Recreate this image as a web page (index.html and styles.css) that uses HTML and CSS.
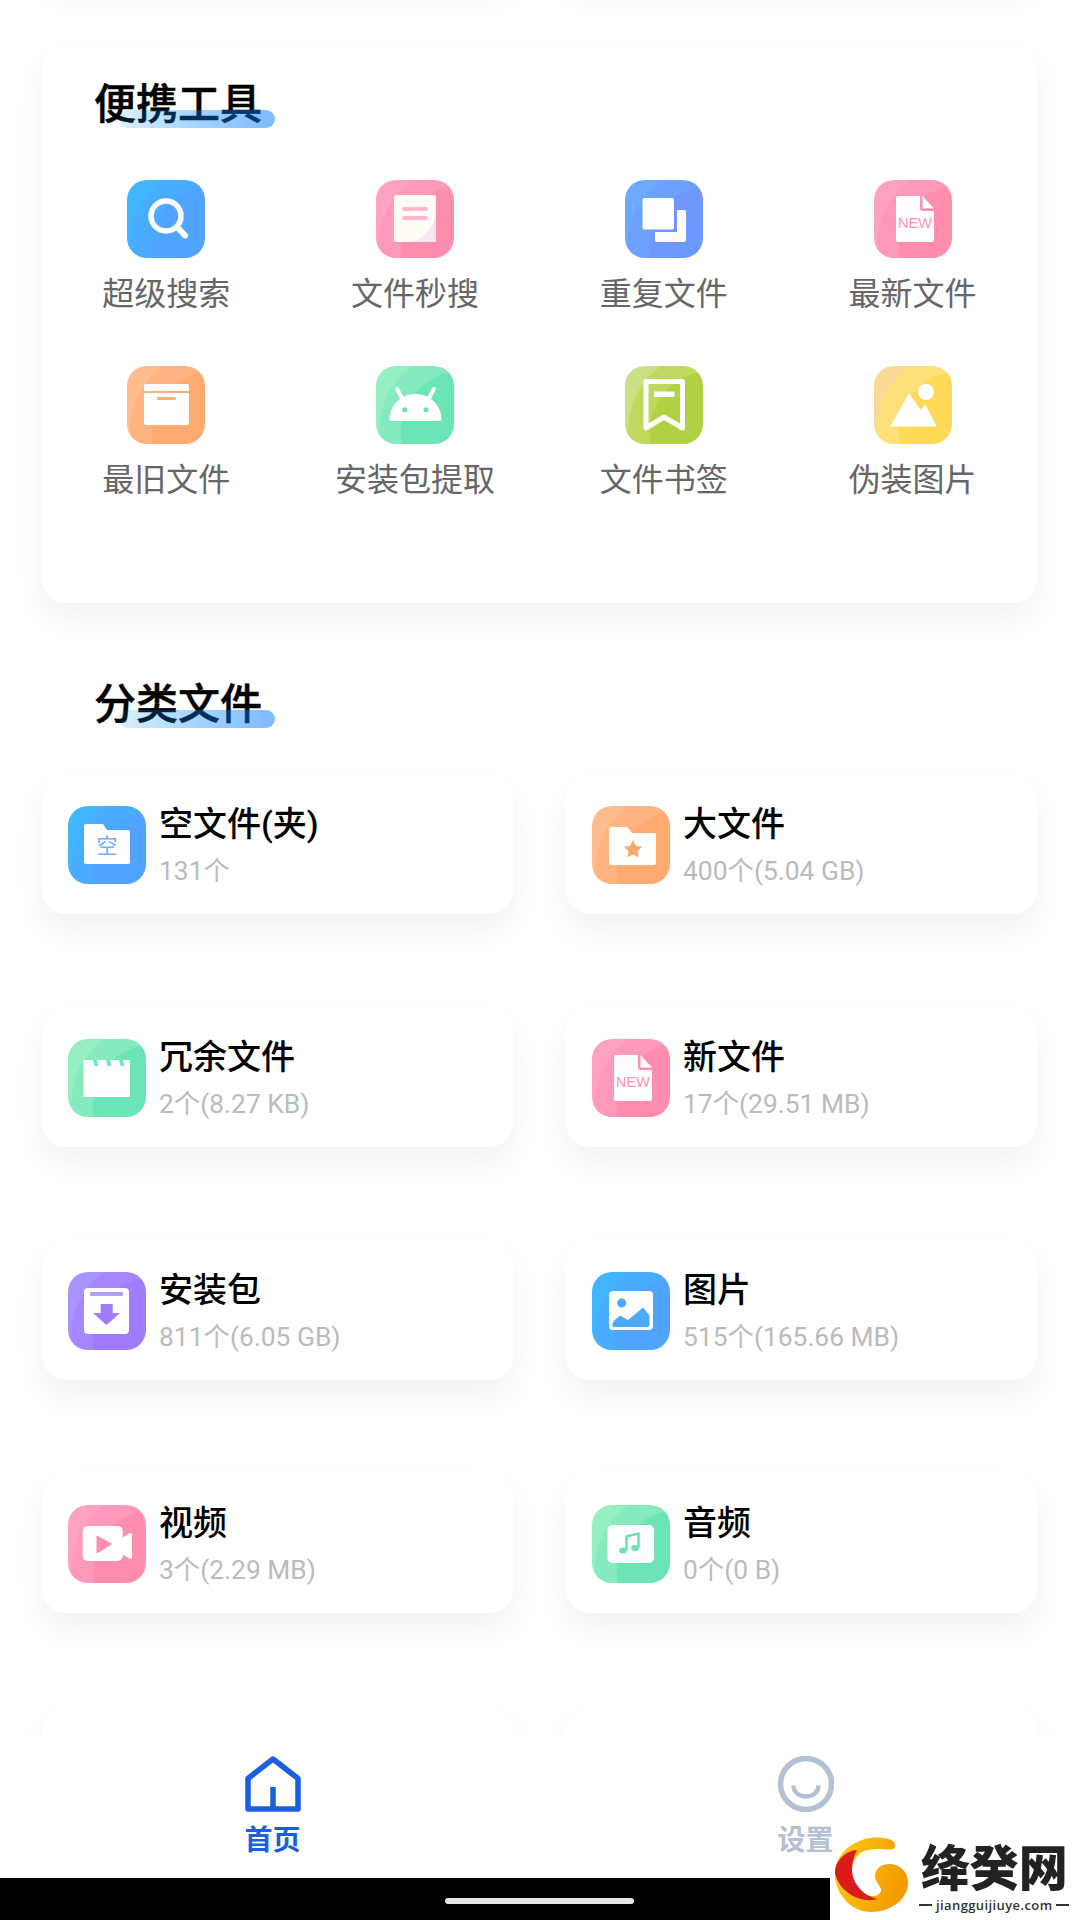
FILE: index.html
```html
<!DOCTYPE html>
<html>
  <head>
    <meta charset="utf-8" />
    <title>文件管理</title>
    <link rel="stylesheet" href="styles.css">
  </head>

  <body>
    <div class="page">
      <div class="card-grid ghost-row">
        <div class="card ghost"></div>
        <div class="card ghost"></div>
      </div>

      <section class="card tools">
        <h2 class="section-title">便携工具<span class="title-bar"></span></h2>
        <div class="tool-grid">
          <div class="tool">
            <div class="tile blue">
              <svg viewBox="0 0 78 78"><circle cx="39" cy="36" r="15" fill="none" stroke="#fff" stroke-width="5.500"/><path d="M50 47l8 8.500" stroke="#fff" stroke-width="6" stroke-linecap="round"/></svg>
            </div>
            <span class="tool-name">超级搜索</span>
          </div>
          <div class="tool">
            <div class="tile pink">
              <svg viewBox="0 0 78 78"><path d="M20 15h38a2 2 0 0 1 2 2v43a2 2 0 0 1-2 2H20a2 2 0 0 1-2-2V17a2 2 0 0 1 2-2z" fill="#fffcf4"/><path d="M60 36v24a2 2 0 0 1-2 2H36c12-4 20-14 24-26z" fill="#fde6f1"/><path d="M28 29h22M28 38h22" stroke="#ffb6d0" stroke-width="4" stroke-linecap="round"/></svg>
            </div>
            <span class="tool-name">文件秒搜</span>
          </div>
          <div class="tool">
            <div class="tile indigo">
              <svg viewBox="0 0 78 78"><rect x="17.500" y="18" width="31.500" height="31.500" rx="2" fill="#fff"/><path d="M52 30h7a2 2 0 0 1 2 2v28a2 2 0 0 1-2 2H32a2 2 0 0 1-2-2v-8h22z" fill="#fff"/></svg>
            </div>
            <span class="tool-name">重复文件</span>
          </div>
          <div class="tool">
            <div class="tile pink">
              <svg viewBox="0 0 78 78"><path d="M24 16h22v12a3 3 0 0 0 3 3h11v29a2 2 0 0 1-2 2H24a2 2 0 0 1-2-2V18a2 2 0 0 1 2-2z" fill="#fff"/><path d="M48.500 16l11.500 12.500H48.500z" fill="#fff"/><text x="41" y="47.500" class="new-mark">NEW</text></svg>
            </div>
            <span class="tool-name">最新文件</span>
          </div>
          <div class="tool">
            <div class="tile orange">
              <svg viewBox="0 0 78 78"><path d="M19 18h41a2 2 0 0 1 2 2v5H17v-5a2 2 0 0 1 2-2z" fill="#fff"/><path d="M17 27h45v30a2 2 0 0 1-2 2H19a2 2 0 0 1-2-2z" fill="#fff"/><rect x="30" y="31" width="19" height="3" rx="1" fill="#ffad72"/></svg>
            </div>
            <span class="tool-name">最旧文件</span>
          </div>
          <div class="tool">
            <div class="tile green">
              <svg viewBox="0 0 78 78"><path d="M13.500 53C14 39 25 28 39.500 28S65 39 65.500 53a2 2 0 0 1-2 2h-48a2 2 0 0 1-2-2z" fill="#fff"/><path d="M21 23l5 9M58 23l-5 9" stroke="#fff" stroke-width="4" stroke-linecap="round"/><circle cx="28.700" cy="43.700" r="2.500" fill="#68e4b4"/><circle cx="50" cy="43.700" r="2.500" fill="#68e4b4"/></svg>
            </div>
            <span class="tool-name">安装包提取</span>
          </div>
          <div class="tool">
            <div class="tile lime">
              <svg viewBox="0 0 78 78"><path d="M21 15.500h36.500V62L39 51 21 62z" fill="none" stroke="#fff" stroke-width="5" stroke-linejoin="round"/><rect x="29" y="25.500" width="20.500" height="5.500" fill="#fff"/></svg>
            </div>
            <span class="tool-name">文件书签</span>
          </div>
          <div class="tool">
            <div class="tile yellow">
              <svg viewBox="0 0 78 78"><circle cx="52" cy="26" r="8" fill="#fff"/><path d="M17 60L35 28l11.500 16.500 4.500-5.500 11 21z" fill="#fff" stroke="#fff" stroke-linejoin="round"/></svg>
            </div>
            <span class="tool-name">伪装图片</span>
          </div>
        </div>
      </section>

      <h2 class="section-title second">分类文件<span class="title-bar"></span></h2>

      <div class="card-grid">
        <div class="card file">
          <div class="tile blue">
            <svg viewBox="0 0 78 78"><path d="M18 18h17l4 6h21a2 2 0 0 1 2 2v30a2 2 0 0 1-2 2H18a2 2 0 0 1-2-2V20a2 2 0 0 1 2-2z" fill="#fff"/><text x="39" y="47" class="kong-mark">空</text></svg>
          </div>
          <div class="file-text">
            <span class="file-name">空文件(夹)</span>
            <span class="file-info">131个</span>
          </div>
        </div>
        <div class="card file">
          <div class="tile orange">
            <svg viewBox="0 0 78 78"><path d="M19 21h16l5 6h22a2 2 0 0 1 2 2v28a2 2 0 0 1-2 2H19a2 2 0 0 1-2-2V23a2 2 0 0 1 2-2z" fill="#fff"/><path d="M41 34l2.800 5.800 6.300.9-4.500 4.400 1 6.300-5.600-3-5.600 3 1-6.300-4.500-4.400 6.300-.9z" fill="#ffa96e"/></svg>
          </div>
          <div class="file-text">
            <span class="file-name">大文件</span>
            <span class="file-info">400个(5.04 GB)</span>
          </div>
        </div>
        <div class="card file">
          <div class="tile green">
            <svg viewBox="0 0 78 78"><rect x="15.500" y="21" width="46.500" height="37" fill="#fff"/><path d="M25 21h4l1.500 6h-4zM38 21h4l1.500 6h-4zM51 21h4l1.500 6h-4z" fill="#78e6bb"/></svg>
          </div>
          <div class="file-text">
            <span class="file-name">冗余文件</span>
            <span class="file-info">2个(8.27 KB)</span>
          </div>
        </div>
        <div class="card file">
          <div class="tile pink">
            <svg viewBox="0 0 78 78"><path d="M24 16h22v12a3 3 0 0 0 3 3h11v29a2 2 0 0 1-2 2H24a2 2 0 0 1-2-2V18a2 2 0 0 1 2-2z" fill="#fff"/><path d="M48.500 16l11.500 12.500H48.500z" fill="#fff"/><text x="41" y="47.500" class="new-mark">NEW</text></svg>
          </div>
          <div class="file-text">
            <span class="file-name">新文件</span>
            <span class="file-info">17个(29.51 MB)</span>
          </div>
        </div>
        <div class="card file">
          <div class="tile purple">
            <svg viewBox="0 0 78 78"><path d="M20 16h37a4 4 0 0 1 4 4v38a4 4 0 0 1-4 4H20a4 4 0 0 1-4-4V20a4 4 0 0 1 4-4z" fill="#fff"/><rect x="22" y="20" width="33" height="4" rx="1" fill="#b79fff"/><path d="M32.700 32h12v9H52L38.500 53 25 41h7.700z" fill="#a07cff"/></svg>
          </div>
          <div class="file-text">
            <span class="file-name">安装包</span>
            <span class="file-info">811个(6.05 GB)</span>
          </div>
        </div>
        <div class="card file">
          <div class="tile blue">
            <svg viewBox="0 0 78 78"><rect x="17" y="19" width="44" height="39" rx="4" fill="#fff"/><circle cx="29.700" cy="31" r="4.500" fill="#4eaaff"/><path d="M20.500 52c0-3 5-6 7.500-8.500l8 4.500 15-12.500 6.500 8V53a2 2 0 0 1-2 2H22a2 2 0 0 1-1.500-3z" fill="#4eaaff"/></svg>
          </div>
          <div class="file-text">
            <span class="file-name">图片</span>
            <span class="file-info">515个(165.66 MB)</span>
          </div>
        </div>
        <div class="card file">
          <div class="tile pink">
            <svg viewBox="0 0 78 78"><rect x="14.700" y="21" width="40" height="35" rx="5" fill="#fff"/><path d="M54 33l8-5a1.500 1.500 0 0 1 2 1.500v23a1.500 1.500 0 0 1-2 1.500l-8-5z" fill="#fff"/><path d="M29 31l14.500 8L29 48z" fill="#ff8fb0" stroke="#ff8fb0" stroke-linejoin="round"/></svg>
          </div>
          <div class="file-text">
            <span class="file-name">视频</span>
            <span class="file-info">3个(2.29 MB)</span>
          </div>
        </div>
        <div class="card file">
          <div class="tile green">
            <svg viewBox="0 0 78 78"><rect x="15.500" y="20" width="46.500" height="38" rx="5" fill="#fff"/><path d="M34.500 45V31.500l12-3V43" fill="none" stroke="#6ae2b4" stroke-width="2.500"/><ellipse cx="31" cy="45.500" rx="3.800" ry="3" fill="#6ae2b4"/><ellipse cx="43" cy="43" rx="3.800" ry="3" fill="#6ae2b4"/></svg>
          </div>
          <div class="file-text">
            <span class="file-name">音频</span>
            <span class="file-info">0个(0 B)</span>
          </div>
        </div>
        <div class="card ghost"></div>
        <div class="card ghost"></div>
      </div>
    </div>

    <div class="bottom">
      <nav class="tabs">
        <div class="tab active">
          <svg viewBox="0 0 56 56" class="tab-icon"><path d="M3 22.500L28 3l25 19.500V53H3zM28 31v22" fill="none" stroke="#1a5fe0" stroke-width="5.500" stroke-linejoin="round"/></svg>
          <span>首页</span>
        </div>
        <div class="tab">
          <svg viewBox="0 0 56 56" class="tab-icon"><circle cx="28" cy="28" r="25.500" fill="none" stroke="#b4c0d4" stroke-width="5.500"/><path d="M15.500 29.500c0 7 6 11 12.500 11s12.500-4 12.500-11" fill="none" stroke="#b4c0d4" stroke-width="4.500"/></svg>
          <span>设置</span>
        </div>
      </nav>
      <div class="system-bar"><div class="home-line"></div></div>
    </div>

    <div class="watermark">
      <svg viewBox="0 0 73 75" class="watermark-logo">
        <defs>
          <linearGradient id="gold" x1="0" y1="0" x2="1" y2="0.300">
            <stop offset="0" stop-color="#fdcb10"/>
            <stop offset="1" stop-color="#f39c00"/>
          </linearGradient>
        </defs>
        <path d="M58 4C50-1 30-2 15 9 3 18-1 30 0 40c2 20 18 35 36 35 20 0 37-13 37-29 0-12-9-19-19-19-8 0-14 5-14 12 0 5 4 8 6 13 1 4-4 8-10 7-11-2-19-13-19-25 0-11 6-19 16-21 12-3 27 3 27-4 0-2 0-4-2-5z" fill="url(#gold)"/>
        <path d="M22 13C10 14 0 24 0 36c2 8 6 14 11 18 9 8 21 11 32 8-13-2-25-14-26-28 0-10 3-17 5-21z" fill="#dc1a1c"/>
      </svg>
      <div class="watermark-text">
        <span class="watermark-name">绛癸网</span>
        <span class="watermark-url"><i></i>jiangguijiuye.com<i></i></span>
      </div>
    </div>
  </body>
</html>
```

FILE: styles.css
```css
* {
  box-sizing: border-box;
}
html,
body {
  margin: 0;
  width: 1080px;
  height: 1920px;
  overflow: hidden;
  background: #fff;
  font-family: Roboto, "Noto Sans CJK SC", sans-serif;
}
.page {
  padding: 0 43px 0 42px;
}

.card {
  background: #fff;
  border-radius: 24px;
  box-shadow: 0 16px 32px rgba(0, 0, 0, 0.055);
}
.card-grid {
  display: grid;
  grid-template-columns: 1fr 1fr;
  column-gap: 53px;
  row-gap: 94px;
}
.ghost {
  height: 139px;
}
.ghost-row {
  margin-top: -160px;
  margin-bottom: 66px;
}

.section-title {
  position: relative;
  display: block;
  width: 168px;
  margin: 0 0 0 52px;
  font-size: 42px;
  line-height: 52px;
  font-weight: 500;
  -webkit-text-stroke: 0.5px #000;
  color: #000;
}
.section-title.second {
  margin-top: 76px;
  margin-bottom: 44px;
}
.title-bar {
  position: absolute;
  left: 25px;
  top: 31px;
  width: 156px;
  height: 18px;
  border-radius: 9px;
  background: linear-gradient(90deg, rgba(0, 150, 255, 0.14), rgba(0, 135, 255, 0.36) 50%, rgba(0, 116, 255, 0.5));
}

.tools {
  height: 558px;
  padding-top: 34px;
}
.tool-grid {
  display: grid;
  grid-template-columns: repeat(4, 1fr);
  row-gap: 55px;
  margin-top: 49px;
}
.tool {
  display: flex;
  flex-direction: column;
  align-items: center;
}
.tool-name {
  margin-top: 19px;
  font-size: 32px;
  line-height: 34px;
  color: #666;
}

.tile {
  flex: none;
  width: 78px;
  height: 78px;
  border-radius: 20px;
  background:
    radial-gradient(circle at 110% 85%, var(--c3) 0 60px, transparent 62px),
    radial-gradient(circle at 110% 85%, var(--c2) 0 82px, transparent 84px),
    var(--c1);
}
.tile svg {
  display: block;
  width: 78px;
  height: 78px;
}
.blue {
  --c1: #42b5ff;
  --c2: #4aacff;
  --c3: #50a3ff;
}
.pink {
  --c1: #ffa2c2;
  --c2: #ff98b9;
  --c3: #ff8dae;
}
.indigo {
  --c1: #6eaaff;
  --c2: #6da1ff;
  --c3: #6e98ff;
}
.orange {
  --c1: #ffbc8e;
  --c2: #ffb380;
  --c3: #ffaa70;
}
.green {
  --c1: #96efc2;
  --c2: #85ebbf;
  --c3: #6be4b6;
}
.lime {
  --c1: #cbdf85;
  --c2: #bed95e;
  --c3: #b0d143;
}
.yellow {
  --c1: #fdd996;
  --c2: #fee07a;
  --c3: #ffda58;
}
.purple {
  --c1: #a893ff;
  --c2: #a586ff;
  --c3: #a07aff;
}
.new-mark {
  font-family: "Liberation Sans", sans-serif;
  font-size: 14.5px;
  fill: #ff92b2;
  text-anchor: middle;
}
.kong-mark {
  font-family: "Noto Sans CJK SC", sans-serif;
  font-size: 21px;
  fill: #6fb0ff;
  text-anchor: middle;
}

.file {
  display: flex;
  gap: 13px;
  height: 139px;
  padding: 31px 26px 30px;
}
.file-text {
  display: flex;
  flex-direction: column;
  justify-content: center;
  gap: 10px;
  padding-top: 2px;
}
.file-name {
  font-size: 34px;
  line-height: 40px;
  font-weight: 500;
  color: #000;
}
.file-info {
  font-size: 26.4px;
  line-height: 34px;
  color: #bbb;
}

.bottom {
  position: absolute;
  left: 0;
  right: 0;
  bottom: 0;
  background: #fff;
}
.tabs {
  display: grid;
  grid-template-columns: 1fr 1fr;
  height: 142px;
  padding: 20px 8px 0 6px;
}
.tab {
  display: flex;
  flex-direction: column;
  align-items: center;
  font-size: 28px;
  line-height: 32px;
  font-weight: 700;
  color: #b4c0d4;
}
.tab.active {
  color: #1a5fe0;
}
.tab-icon {
  display: block;
  width: 56px;
  height: 56px;
  margin-bottom: 13px;
}
.system-bar {
  width: 830px;
  height: 42px;
  padding: 20px 0 0 445px;
  background: #000;
}
.home-line {
  width: 189px;
  height: 6px;
  border-radius: 3px;
  background: #e6e6e6;
}

.watermark {
  position: absolute;
  left: 835px;
  top: 1837px;
  display: flex;
  gap: 11px;
}
.watermark-logo {
  display: block;
  width: 73px;
  height: 75px;
}
.watermark-text {
  display: flex;
  flex-direction: column;
  align-items: center;
  padding-top: 2px;
}
.watermark-name {
  font-family: "Noto Sans CJK SC", sans-serif;
  font-size: 49px;
  line-height: 52px;
  font-weight: 900;
  color: #222;
}
.watermark-url {
  display: flex;
  align-items: center;
  gap: 4px;
  margin-top: 5px;
  font-family: "Open Sans", sans-serif;
  font-size: 13px;
  line-height: 18px;
  font-weight: 600;
  letter-spacing: 0.4px;
  color: #333;
}
.watermark-url i {
  display: block;
  width: 13px;
  height: 2px;
  background: #333;
}
```
